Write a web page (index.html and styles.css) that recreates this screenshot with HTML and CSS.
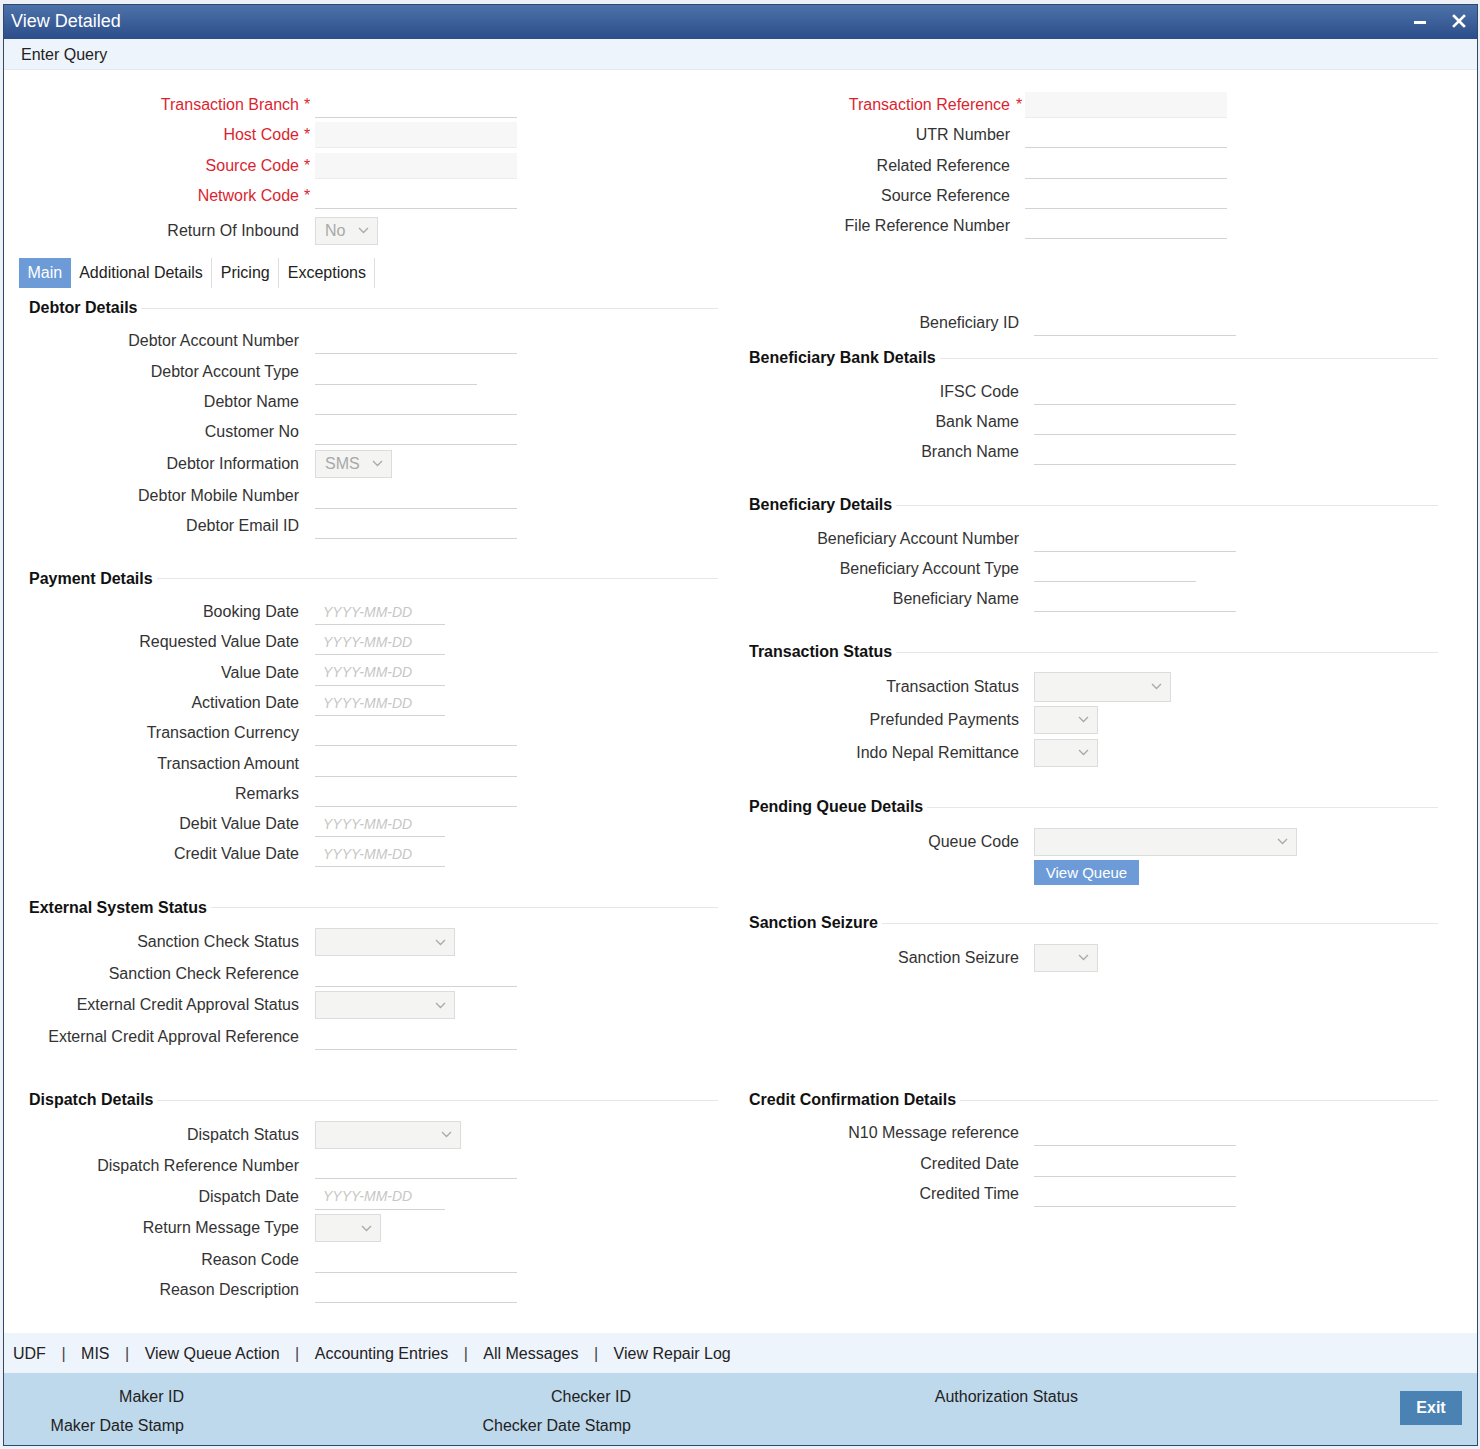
FILE: index.html
```html
<!DOCTYPE html>
<html>
<head>
<meta charset="utf-8">
<title>View Detailed</title>
<link rel="stylesheet" href="styles.css">
</head>
<body>
<div class="window">
  <div class="titlebar">
    <span class="title">View Detailed</span>
    <span class="tb-icons">
      <svg class="ic-min" width="12" height="14" viewBox="0 0 12 14"><rect x="0" y="6" width="12" height="3" fill="#fff"/></svg>
      <svg class="ic-close" width="14" height="14" viewBox="0 0 14 14"><path d="M2 2L12 12M12 2L2 12" stroke="#fff" stroke-width="2.6" stroke-linecap="square"/></svg>
    </span>
  </div>
  <div class="toolbar">Enter Query</div>

  <div class="content">
    <div class="top">
      <div class="col">
        <div class="row"><div class="lbl req">Transaction Branch</div><div class="gap">*</div><div class="inp"></div></div>
        <div class="row"><div class="lbl req">Host Code</div><div class="gap">*</div><div class="inp ro"></div></div>
        <div class="row"><div class="lbl req">Source Code</div><div class="gap">*</div><div class="inp ro"></div></div>
        <div class="row"><div class="lbl req">Network Code</div><div class="gap">*</div><div class="inp"></div></div>
        <div class="row s inbound"><div class="lbl">Return Of Inbound</div><div class="gap"></div><div class="sel w63"><span>No</span><svg width="11" height="7" viewBox="0 0 11 7"><path d="M1 1L5.5 5.5L10 1" fill="none" stroke="#a8a8a8" stroke-width="1.3"/></svg></div></div>
      </div>
      <div class="col tr">
        <div class="row"><div class="lbl req">Transaction Reference</div><div class="gap">*</div><div class="inp ro"></div></div>
        <div class="row"><div class="lbl">UTR Number</div><div class="gap"></div><div class="inp"></div></div>
        <div class="row"><div class="lbl">Related Reference</div><div class="gap"></div><div class="inp"></div></div>
        <div class="row"><div class="lbl">Source Reference</div><div class="gap"></div><div class="inp"></div></div>
        <div class="row"><div class="lbl">File Reference Number</div><div class="gap"></div><div class="inp"></div></div>
      </div>
    </div>

    <div class="tabs">
      <div class="tab active">Main</div>
      <div class="tab">Additional Details</div>
      <div class="tab">Pricing</div>
      <div class="tab">Exceptions</div>
    </div>

    <div class="part a">
      <div class="col">
        <div class="sec">
          <div class="sec-h"><span>Debtor Details</span></div>
          <div class="row"><div class="lbl">Debtor Account Number</div><div class="gap"></div><div class="inp"></div></div>
          <div class="row"><div class="lbl">Debtor Account Type</div><div class="gap"></div><div class="inp short"></div></div>
          <div class="row"><div class="lbl">Debtor Name</div><div class="gap"></div><div class="inp"></div></div>
          <div class="row"><div class="lbl">Customer No</div><div class="gap"></div><div class="inp"></div></div>
          <div class="row s"><div class="lbl">Debtor Information</div><div class="gap"></div><div class="sel w77"><span>SMS</span><svg width="11" height="7" viewBox="0 0 11 7"><path d="M1 1L5.5 5.5L10 1" fill="none" stroke="#a8a8a8" stroke-width="1.3"/></svg></div></div>
          <div class="row"><div class="lbl">Debtor Mobile Number</div><div class="gap"></div><div class="inp"></div></div>
          <div class="row"><div class="lbl">Debtor Email ID</div><div class="gap"></div><div class="inp"></div></div>
        </div>
        <div class="sec">
          <div class="sec-h"><span>Payment Details</span></div>
          <div class="row"><div class="lbl">Booking Date</div><div class="gap"></div><div class="date">YYYY-MM-DD</div></div>
          <div class="row"><div class="lbl">Requested Value Date</div><div class="gap"></div><div class="date">YYYY-MM-DD</div></div>
          <div class="row"><div class="lbl">Value Date</div><div class="gap"></div><div class="date">YYYY-MM-DD</div></div>
          <div class="row"><div class="lbl">Activation Date</div><div class="gap"></div><div class="date">YYYY-MM-DD</div></div>
          <div class="row"><div class="lbl">Transaction Currency</div><div class="gap"></div><div class="inp"></div></div>
          <div class="row"><div class="lbl">Transaction Amount</div><div class="gap"></div><div class="inp"></div></div>
          <div class="row"><div class="lbl">Remarks</div><div class="gap"></div><div class="inp"></div></div>
          <div class="row"><div class="lbl">Debit Value Date</div><div class="gap"></div><div class="date">YYYY-MM-DD</div></div>
          <div class="row"><div class="lbl">Credit Value Date</div><div class="gap"></div><div class="date">YYYY-MM-DD</div></div>
        </div>
        <div class="sec">
          <div class="sec-h"><span>External System Status</span></div>
          <div class="row s"><div class="lbl">Sanction Check Status</div><div class="gap"></div><div class="sel w140"><span></span><svg width="11" height="7" viewBox="0 0 11 7"><path d="M1 1L5.5 5.5L10 1" fill="none" stroke="#a8a8a8" stroke-width="1.3"/></svg></div></div>
          <div class="row"><div class="lbl">Sanction Check Reference</div><div class="gap"></div><div class="inp"></div></div>
          <div class="row s"><div class="lbl">External Credit Approval Status</div><div class="gap"></div><div class="sel w140"><span></span><svg width="11" height="7" viewBox="0 0 11 7"><path d="M1 1L5.5 5.5L10 1" fill="none" stroke="#a8a8a8" stroke-width="1.3"/></svg></div></div>
          <div class="row"><div class="lbl">External Credit Approval Reference</div><div class="gap"></div><div class="inp"></div></div>
        </div>
      </div>

      <div class="col right first-pad">
        <div class="solo">
          <div class="row"><div class="lbl">Beneficiary ID</div><div class="gap"></div><div class="inp"></div></div>
        </div>
        <div class="sec">
          <div class="sec-h"><span>Beneficiary Bank Details</span></div>
          <div class="row"><div class="lbl">IFSC Code</div><div class="gap"></div><div class="inp"></div></div>
          <div class="row"><div class="lbl">Bank Name</div><div class="gap"></div><div class="inp"></div></div>
          <div class="row"><div class="lbl">Branch Name</div><div class="gap"></div><div class="inp"></div></div>
        </div>
        <div class="sec">
          <div class="sec-h"><span>Beneficiary Details</span></div>
          <div class="row"><div class="lbl">Beneficiary Account Number</div><div class="gap"></div><div class="inp"></div></div>
          <div class="row"><div class="lbl">Beneficiary Account Type</div><div class="gap"></div><div class="inp short"></div></div>
          <div class="row"><div class="lbl">Beneficiary Name</div><div class="gap"></div><div class="inp"></div></div>
        </div>
        <div class="sec">
          <div class="sec-h"><span>Transaction Status</span></div>
          <div class="row s"><div class="lbl">Transaction Status</div><div class="gap"></div><div class="sel w137 tall"><span></span><svg width="11" height="7" viewBox="0 0 11 7"><path d="M1 1L5.5 5.5L10 1" fill="none" stroke="#a8a8a8" stroke-width="1.3"/></svg></div></div>
          <div class="row s"><div class="lbl">Prefunded Payments</div><div class="gap"></div><div class="sel w64"><span></span><svg width="11" height="7" viewBox="0 0 11 7"><path d="M1 1L5.5 5.5L10 1" fill="none" stroke="#a8a8a8" stroke-width="1.3"/></svg></div></div>
          <div class="row s"><div class="lbl">Indo Nepal Remittance</div><div class="gap"></div><div class="sel w64"><span></span><svg width="11" height="7" viewBox="0 0 11 7"><path d="M1 1L5.5 5.5L10 1" fill="none" stroke="#a8a8a8" stroke-width="1.3"/></svg></div></div>
        </div>
        <div class="sec">
          <div class="sec-h"><span>Pending Queue Details</span></div>
          <div class="row s"><div class="lbl">Queue Code</div><div class="gap"></div><div class="sel w263"><span></span><svg width="11" height="7" viewBox="0 0 11 7"><path d="M1 1L5.5 5.5L10 1" fill="none" stroke="#a8a8a8" stroke-width="1.3"/></svg></div></div>
          <div class="btn-row"><div class="lbl"></div><div class="gap"></div><div class="btn">View Queue</div></div>
        </div>
        <div class="sec">
          <div class="sec-h"><span>Sanction Seizure</span></div>
          <div class="row s"><div class="lbl">Sanction Seizure</div><div class="gap"></div><div class="sel w64"><span></span><svg width="11" height="7" viewBox="0 0 11 7"><path d="M1 1L5.5 5.5L10 1" fill="none" stroke="#a8a8a8" stroke-width="1.3"/></svg></div></div>
        </div>
      </div>
    </div>

    <div class="part b">
      <div class="col">
        <div class="sec">
          <div class="sec-h"><span>Dispatch Details</span></div>
          <div class="row s"><div class="lbl">Dispatch Status</div><div class="gap"></div><div class="sel w146"><span></span><svg width="11" height="7" viewBox="0 0 11 7"><path d="M1 1L5.5 5.5L10 1" fill="none" stroke="#a8a8a8" stroke-width="1.3"/></svg></div></div>
          <div class="row"><div class="lbl">Dispatch Reference Number</div><div class="gap"></div><div class="inp"></div></div>
          <div class="row"><div class="lbl">Dispatch Date</div><div class="gap"></div><div class="date">YYYY-MM-DD</div></div>
          <div class="row s"><div class="lbl">Return Message Type</div><div class="gap"></div><div class="sel w66"><span></span><svg width="11" height="7" viewBox="0 0 11 7"><path d="M1 1L5.5 5.5L10 1" fill="none" stroke="#a8a8a8" stroke-width="1.3"/></svg></div></div>
          <div class="row"><div class="lbl">Reason Code</div><div class="gap"></div><div class="inp"></div></div>
          <div class="row"><div class="lbl">Reason Description</div><div class="gap"></div><div class="inp"></div></div>
        </div>
      </div>
      <div class="col right">
        <div class="sec">
          <div class="sec-h"><span>Credit Confirmation Details</span></div>
          <div class="row"><div class="lbl">N10 Message reference</div><div class="gap"></div><div class="inp"></div></div>
          <div class="row"><div class="lbl">Credited Date</div><div class="gap"></div><div class="inp"></div></div>
          <div class="row"><div class="lbl">Credited Time</div><div class="gap"></div><div class="inp"></div></div>
        </div>
      </div>
    </div>
  </div>

  <div class="links">
    <span>UDF</span><span class="sep">|</span><span>MIS</span><span class="sep">|</span><span>View Queue Action</span><span class="sep">|</span><span>Accounting Entries</span><span class="sep">|</span><span>All Messages</span><span class="sep">|</span><span>View Repair Log</span>
  </div>

  <div class="footer">
    <div class="fcol c1"><div>Maker ID</div><div>Maker Date Stamp</div></div>
    <div class="fcol c2"><div>Checker ID</div><div>Checker Date Stamp</div></div>
    <div class="fcol c3"><div>Authorization Status</div></div>
    <div class="exit">Exit</div>
  </div>
</div>
</body>
</html>
```

FILE: styles.css
```css
html, body {
  margin: 0;
  padding: 0;
}
body {
  background: #edf1f6;
  font-family: "Liberation Sans", Arial, sans-serif;
  font-size: 16px;
  color: #333;
}
.window {
  margin: 4px 0 0 3px;
  width: 1475px;
  height: 1442px;
  box-sizing: border-box;
  border: 1px solid #2d4a6d;
  background: #fff;
  display: flex;
  flex-direction: column;
}
.titlebar {
  height: 34px;
  flex: none;
  background: linear-gradient(#4d72a9, #2b4d8a);
  display: flex;
  align-items: center;
  padding: 0 11px 2px 7px;
  box-sizing: border-box;
  color: #fff;
  font-size: 18px;
}
.tb-icons {
  margin-left: auto;
  display: flex;
  align-items: center;
  gap: 26px;
}
.ic-min { display: block; margin-top: 1px; }
.ic-close { display: block; }
.toolbar {
  height: 31px;
  flex: none;
  box-sizing: border-box;
  background: #eef4fc;
  border-bottom: 1px solid #e3e9f1;
  padding: 2px 0 0 17px;
  display: flex;
  align-items: center;
  color: #222;
}
.content {
  flex: 1;
  padding-top: 20px;
}
.top, .part {
  display: flex;
}
.col {
  width: 720px;
  flex: none;
}
.row {
  display: flex;
  align-items: center;
  height: 30.3px;
}
.row.s {
  height: 33px;
}
.row.inbound {
  margin-top: 3px;
}
.lbl {
  width: 295px;
  flex: none;
  text-align: right;
  white-space: nowrap;
}
.lbl.req {
  color: #dc1f30;
}
.gap {
  width: 16px;
  flex: none;
  box-sizing: border-box;
  padding-left: 5px;
  color: #dc1f30;
}
.col.right .gap {
  width: 15px;
}
.col.tr .lbl {
  width: 286px;
}
.col.tr .gap {
  width: 15px;
  padding-left: 6px;
}
.inp {
  width: 202px;
  height: 26px;
  box-sizing: border-box;
  border-bottom: 1px solid #d3d3d3;
}
.inp.ro {
  background: #f7f7f7;
  border-bottom-color: #ececec;
}
.inp.short {
  width: 162px;
}
.date {
  width: 130px;
  height: 26px;
  box-sizing: border-box;
  border-bottom: 1px solid #d3d3d3;
  padding-left: 8px;
  display: flex;
  align-items: center;
  font-size: 14px;
  font-style: italic;
  color: #c6c6c6;
}
.sel {
  height: 28px;
  box-sizing: border-box;
  border: 1px solid #dcdcdc;
  background: #f4f4f2;
  display: flex;
  align-items: center;
  justify-content: space-between;
  padding: 0 8px 0 9px;
  color: #a9a9a9;
}
.sel svg { display: block; }
.sel.tall { height: 30px; }
.w63 { width: 63px; }
.w64 { width: 64px; }
.w66 { width: 66px; }
.w77 { width: 77px; }
.w137 { width: 137px; }
.w140 { width: 140px; }
.w146 { width: 146px; }
.w263 { width: 263px; }

.tabs {
  display: flex;
  margin: 11px 0 0 15px;
  height: 30px;
}
.tab {
  padding: 0 8.5px;
  display: flex;
  align-items: center;
  border-right: 1px solid #dedede;
  color: #222;
}
.tab.active {
  background: #6c9bd8;
  color: #fff;
  border-right: none;
}
.part.a {
  margin-top: 10px;
}
.part.b {
  margin-top: 10px;
}
.sec {
  margin-bottom: 28px;
}
.sec-h {
  display: flex;
  align-items: center;
  height: 20px;
  padding: 0 6px 0 25px;
  margin-bottom: 8px;
  font-weight: bold;
  color: #111;
}
.sec-h::after {
  content: "";
  flex: 1;
  height: 1px;
  background: #e7e7e7;
  margin-left: 4px;
}
.first-pad {
  padding-top: 10px;
}
.solo {
  margin-bottom: 10px;
}
.btn-row {
  display: flex;
  margin: 2px 0 9px;
}
.btn {
  width: 105px;
  height: 25px;
  background: #6c9bd8;
  color: #fff;
  font-size: 15px;
  display: flex;
  align-items: center;
  justify-content: center;
}
.links {
  height: 40px;
  flex: none;
  background: #eef4fc;
  display: flex;
  align-items: center;
  padding: 1px 0 0 9px;
  box-sizing: border-box;
  color: #222;
}
.links .sep {
  padding: 0 15.5px;
  color: #444;
}
.footer {
  height: 72px;
  flex: none;
  background: #bed8ec;
  display: flex;
  align-items: flex-start;
  padding-top: 9px;
  box-sizing: border-box;
  color: #222;
}
.fcol {
  text-align: right;
  line-height: 29px;
  flex: none;
}
.c1 { width: 180px; }
.c2 { width: 447px; }
.c3 { width: 447px; }
.exit {
  margin: 9px 15px 0 auto;
  width: 62px;
  height: 34px;
  background: #4b82b4;
  color: #fff;
  font-weight: bold;
  display: flex;
  align-items: center;
  justify-content: center;
}
```
